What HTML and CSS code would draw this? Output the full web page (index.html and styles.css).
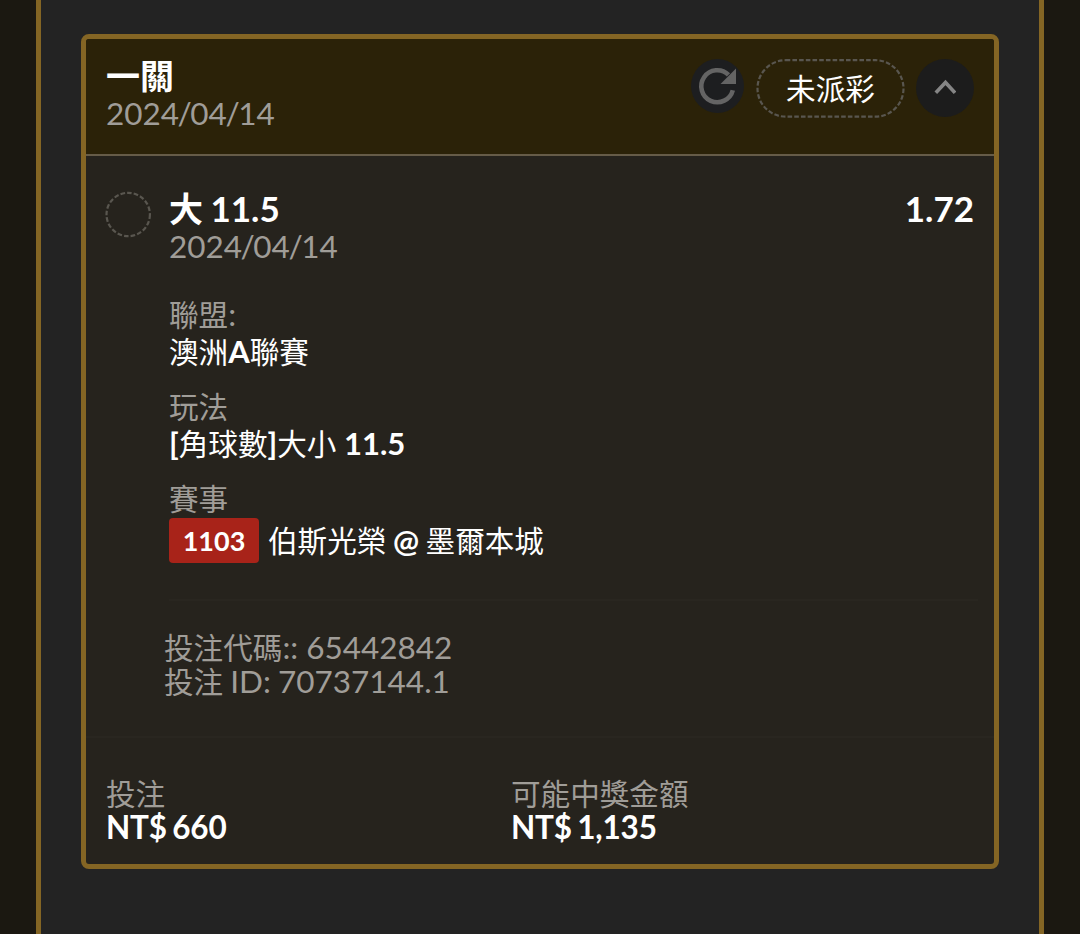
FILE: index.html
```html
<!DOCTYPE html>
<html lang="zh-Hant">
  <head>
    <meta charset="UTF-8" />
    <meta name="viewport" content="width=device-width, initial-scale=1.0" />
    <title>投注紀錄</title>
    <link rel="stylesheet" href="styles.css">
  </head>
  <body>
    <div class="panel">
      <div class="card">
        <div class="card-header">
          <div class="card-title">
            <div class="title"><span class="zh">一關</span></div>
            <div class="date">2024<span class="slash">/</span>04<span class="slash">/</span>14</div>
          </div>
          <button class="refresh" aria-label="refresh">
            <svg width="53" height="54" viewBox="0 0 53 54">
              <path d="M41.8 31.2A16 16 0 1 1 37.5 15.8" fill="none" stroke="#646464" stroke-width="4.6" />
              <path d="M45 9.5V25H29.5z" fill="#646464" />
            </svg>
          </button>
          <div class="status">
            <svg class="status-ring" width="149" height="60" viewBox="0 0 149 60">
              <rect x="1.5" y="1.2" width="146" height="56.5" rx="28.2" />
            </svg>
            <span class="zh">未派彩</span>
          </div>
          <button class="toggle" aria-label="collapse">
            <svg width="22" height="18" viewBox="0 0 22 18">
              <path d="M1.8 13.8L11.5 3.5L21 13.8" fill="none" stroke="#858585" stroke-width="3.6" />
            </svg>
          </button>
        </div>

        <div class="bet">
          <svg class="bet-dot" width="46" height="47" viewBox="0 0 46 47">
            <circle cx="23.2" cy="23.5" r="21.7" />
          </svg>
          <div class="bet-body">
            <div class="bet-top">
              <div class="title"><span class="zh">大</span> 11.5</div>
              <div class="odds">1.72</div>
            </div>
            <div class="date">2024<span class="slash">/</span>04<span class="slash">/</span>14</div>

            <div class="info">
              <div class="label"><span class="zh">聯盟</span>:</div>
              <div class="value"><span class="zh">澳洲</span>A<span class="zh">聯賽</span></div>
            </div>
            <div class="info">
              <div class="label"><span class="zh">玩法</span></div>
              <div class="value">[<span class="zh">角球數</span>]<span class="zh">大小</span> 11.5</div>
            </div>
            <div class="info">
              <div class="label"><span class="zh">賽事</span></div>
              <div class="value match">
                <span class="badge">1103</span>
                <span><span class="zh">伯斯光榮</span> @ <span class="zh">墨爾本城</span></span>
              </div>
            </div>

            <div class="codes">
              <div class="code"><span class="zh">投注代碼</span>:: 65442842</div>
              <div class="code bet-id"><span class="zh">投注</span> ID: 70737144.1</div>
            </div>
          </div>
        </div>

        <div class="card-footer">
          <div class="amount">
            <div class="label"><span class="zh">投注</span></div>
            <div class="money">NT$ 660</div>
          </div>
          <div class="amount">
            <div class="label"><span class="zh">可能中獎金額</span></div>
            <div class="money">NT$ 1,135</div>
          </div>
        </div>
      </div>
    </div>
  </body>
</html>
```
FILE: styles.css
```css
* {
  box-sizing: border-box;
}
body {
  margin: 0;
  padding: 0 36px;
  background: #1b1811;
  font-family: Lato, "Noto Sans CJK TC", sans-serif;
  font-size: 31.5px;
  color: #a09d98;
}
button {
  padding: 0;
  border: 0;
  border-radius: 50%;
  display: flex;
  align-items: center;
  justify-content: center;
}
.zh {
  font-family: "Noto Sans CJK TC", sans-serif;
  font-size: 29.6px;
  font-weight: 400;
  line-height: 1;
}
.panel {
  height: 934px;
  padding: 34px 40px 0;
  background: #232323;
  border: solid #846524;
  border-width: 0 5px;
}
.card {
  height: 835px;
  background: #26231d;
  border: 5px solid #846524;
  border-radius: 8px;
  overflow: hidden;
}

/* header */
.card-header {
  display: flex;
  height: 117px;
  padding: 17px 20px 0 20px;
  background: #2b2208;
  border-bottom: 2px solid #665c48;
}
.card-title {
  flex: 1;
}
.title,
.odds {
  color: #fff;
  font-size: 35px;
  font-weight: bold;
  line-height: 38px;
}
.title {
  word-spacing: -1px;
}
.title .zh {
  font-size: 34px;
  font-weight: bold;
}
.date {
  line-height: 38px;
}
.slash {
  margin: 0 -1.5px;
}
.refresh {
  width: 53px;
  height: 54px;
  margin: 3px 12px 0 0;
  background: #1d1e20;
}
.status {
  position: relative;
  width: 149px;
  height: 58px;
  margin: 3px 11px 0 0;
  color: #fff;
  display: flex;
  align-items: center;
  justify-content: center;
}
.status-ring {
  position: absolute;
  top: 0;
  left: 0;
}
.status-ring rect,
.bet-dot circle {
  fill: none;
  stroke: #59564f;
  stroke-width: 2.2;
  stroke-dasharray: 4.6 2.1;
}
.toggle {
  width: 58px;
  height: 58px;
  margin-top: 3px;
  background: #1c1c1c;
}

/* bet detail */
.bet {
  display: flex;
  gap: 18px;
  height: 582px;
  padding: 33px 16px 0 19px;
  border-bottom: 2px solid #292620;
}
.bet-dot {
  flex: none;
  margin-top: 2px;
}
.bet-body {
  flex: 1;
}
.bet-top {
  display: flex;
  justify-content: space-between;
  padding-right: 4px;
}
.info {
  margin-top: 18px;
  line-height: 37px;
}
.date + .info {
  margin-top: 31px;
}
.value {
  color: #fff;
  font-size: 31px;
  font-weight: bold;
}
.match {
  display: flex;
  align-items: center;
  gap: 9px;
  margin-top: 1px;
  word-spacing: -1px;
}
.badge {
  width: 90px;
  height: 45px;
  background: #a82319;
  border-radius: 4px;
  font-size: 27px;
  line-height: 46px;
  text-align: center;
}
.codes {
  margin-top: 36px;
  padding-top: 29px;
  border-top: 2px solid #292620;
  line-height: 34px;
}
.code {
  margin-left: -5px;
}
.bet-id {
  word-spacing: -1px;
}

/* footer */
.card-footer {
  display: flex;
  padding: 38px 20px 0;
  line-height: 34px;
}
.amount {
  width: 405px;
}
.money {
  color: #fff;
  font-weight: bold;
  letter-spacing: -0.2px;
  word-spacing: -2px;
}
```
